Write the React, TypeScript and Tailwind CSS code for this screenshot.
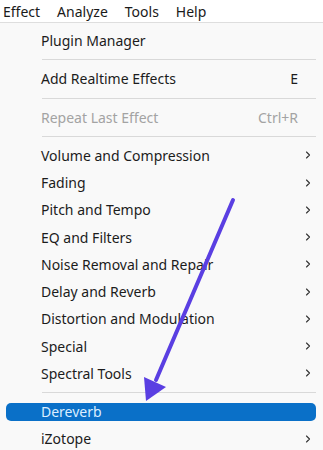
import { ChevronRight } from "lucide-react";

const font = { ui: "'Segoe UI', 'Noto Sans', 'Open Sans', sans-serif" };

type Item =
  | { kind: "item"; label: string; shortcut?: string; sub?: boolean; disabled?: boolean; active?: boolean }
  | { kind: "sep" };

const items: Item[] = [
  { kind: "item", label: "Plugin Manager" },
  { kind: "sep" },
  { kind: "item", label: "Add Realtime Effects", shortcut: "E" },
  { kind: "sep" },
  { kind: "item", label: "Repeat Last Effect", shortcut: "Ctrl+R", disabled: true },
  { kind: "sep" },
  { kind: "item", label: "Volume and Compression", sub: true },
  { kind: "item", label: "Fading", sub: true },
  { kind: "item", label: "Pitch and Tempo", sub: true },
  { kind: "item", label: "EQ and Filters", sub: true },
  { kind: "item", label: "Noise Removal and Repair", sub: true },
  { kind: "item", label: "Delay and Reverb", sub: true },
  { kind: "item", label: "Distortion and Modulation", sub: true },
  { kind: "item", label: "Special", sub: true },
  { kind: "item", label: "Spectral Tools", sub: true },
  { kind: "sep" },
  { kind: "item", label: "Dereverb", active: true },
  { kind: "item", label: "iZotope", sub: true },
];

const menuBar = ["Effect", "Analyze", "Tools", "Help"];

function MenuRow({ item }: { item: Extract<Item, { kind: "item" }> }) {
  if (item.active) {
    return (
      <div className="flex h-[27.25px] items-center px-[6px]">
        <div className="flex h-[18px] w-[310px] items-center rounded-[5px] bg-[#0a70c8] pl-[35px] text-[14px] text-[#dbeeff]">
          {item.label}
        </div>
      </div>
    );
  }
  return (
    <div
      className={`flex h-[27.25px] items-center pl-[41px] pr-[9px] text-[14px] ${
        item.disabled ? "text-[#a3a3a3]" : "text-[#1c1c1c]"
      }`}
    >
      <span className="flex-1">{item.label}</span>
      {item.shortcut ? <span className="mr-[16px]">{item.shortcut}</span> : null}
      {item.sub ? <ChevronRight className="h-[12px] w-[12px] text-[#333]" strokeWidth={2.2} /> : null}
    </div>
  );
}

export default function App() {
  return (
    <div className="relative h-[450px] w-[323px] overflow-hidden bg-white" style={{ fontFamily: font.ui }}>
      <div className="flex h-[22px] items-center gap-[17px] pl-[3px] text-[14px] text-[#1a1a1a]">
        {menuBar.map((m) => (
          <span key={m} className="flex h-full items-center">
            {m}
          </span>
        ))}
      </div>
      <div className="h-[428px] border-t border-[#dedede] bg-[#f9f9f9] pt-[4px]">
        {items.map((item, i) =>
          item.kind === "sep" ? (
            <div key={i} className="flex h-[11px] items-center pl-[42px] pr-[7px]">
              <div className="h-px w-full bg-[#d9d9d9]" />
            </div>
          ) : (
            <MenuRow key={i} item={item} />
          ),
        )}
      </div>
      <svg className="pointer-events-none absolute left-0 top-0" width="323" height="450" viewBox="0 0 323 450">
        <line x1="233" y1="200" x2="156" y2="380" stroke="#5a3fe2" strokeWidth="4" strokeLinecap="round" />
        <polygon points="146,401 144,377 166,387" fill="#5a3fe2" />
      </svg>
    </div>
  );
}
